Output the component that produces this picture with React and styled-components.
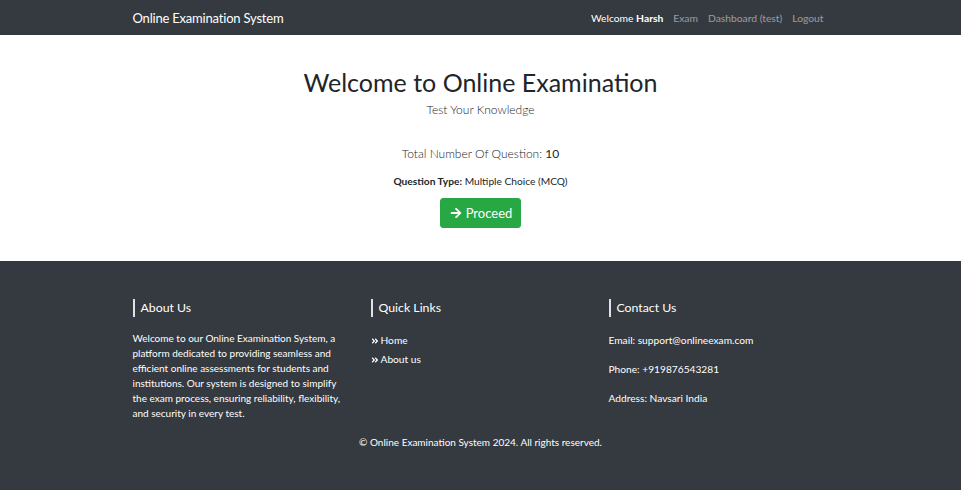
import React from "react";
import styled, { createGlobalStyle } from "styled-components";

const GlobalStyle = createGlobalStyle`
  body {
    margin: 0;
    font-family: Lato, "Open Sans", sans-serif;
    color: #212529;
    background: #fff;
  }
  * { box-sizing: border-box; }
`;

const Container = styled.div`
  width: 720px;
  margin: 0 auto;
  padding: 0 12px;
`;

const Navbar = styled.nav`
  background: #343a40;
  height: 35px;
`;

const NavInner = styled(Container)`
  display: flex;
  align-items: center;
  justify-content: space-between;
  height: 100%;
`;

const Brand = styled.a`
  color: #fff;
  font-size: 13px;
  letter-spacing: -0.2px;
  text-decoration: none;
`;

const NavLinks = styled.div`
  display: flex;
  gap: 10px;
  font-size: 10.3px;
  padding-right: 5px;
`;

const NavLink = styled.a`
  color: ${(p) => (p.active ? "#fff" : "rgba(255,255,255,0.5)")};
  text-decoration: none;
  b { font-weight: 700; }
`;

const Hero = styled.main`
  height: 226px;
  display: flex;
  flex-direction: column;
  align-items: center;
  padding-top: 29px;
`;

const Title = styled.h1`
  margin: 0;
  font-size: 25px;
  font-weight: 400;
  line-height: 36px;
`;

const Lead = styled.p`
  margin: 0;
  font-size: 12px;
  font-weight: 300;
  line-height: 20px;
`;

const Count = styled.p`
  margin: 24px 0 0;
  font-size: 12px;
  font-weight: 300;
  line-height: 20px;
  b { font-weight: 400; }
`;

const TypeLine = styled.p`
  margin: 10px 0 0;
  font-size: 10.2px;
  line-height: 14px;
  b { font-weight: 700; }
`;

const ProceedButton = styled.button`
  margin-top: 10px;
  display: inline-flex;
  align-items: center;
  gap: 4px;
  height: 30px;
  padding: 0 8px 0 9px;
  background: #28a745;
  border: 1px solid #28a745;
  border-radius: 3px;
  color: #fff;
  font-family: inherit;
  font-size: 13px;
  cursor: pointer;
  svg { width: 12px; height: 12px; fill: #fff; }
`;

const Footer = styled.footer`
  background: #343a40;
  height: 229px;
  color: #fff;
  padding-top: 38px;
`;

const FooterGrid = styled(Container)`
  display: grid;
  grid-template-columns: 238px 238px 1fr;
  padding-left: 12px;
`;

const FooterHeading = styled.h5`
  margin: 0 0 14px;
  border-left: 2px solid #dee2e6;
  padding-left: 6px;
  font-size: 12.3px;
  font-weight: 400;
  line-height: 18px;
`;

const FooterText = styled.p`
  margin: 0;
  width: 212px;
  font-size: 10px;
  line-height: 15px;
`;

const LinkList = styled.ul`
  list-style: none;
  margin: 0;
  padding: 2px 0 0;
  display: flex;
  flex-direction: column;
  gap: 4px;
`;

const FooterLink = styled.a`
  display: flex;
  align-items: center;
  gap: 2px;
  color: #fff;
  font-size: 10.2px;
  line-height: 15px;
  text-decoration: none;
  svg { width: 8px; height: 8px; fill: #fff; }
`;

const ContactList = styled.div`
  padding-top: 2px;
`;

const ContactLine = styled.p`
  margin: 0 0 14px;
  font-size: 10.2px;
  line-height: 15px;
`;

const Copyright = styled.p`
  margin: 14px 0 0;
  text-align: center;
  font-size: 10px;
  line-height: 15px;
`;

const ArrowIcon = () => (
  <svg viewBox="0 0 448 512">
    <path d="M190.5 66.9l22.2-22.2c9.4-9.4 24.6-9.4 33.9 0L441 239c9.4 9.4 9.4 24.6 0 33.9L246.6 467.3c-9.4 9.4-24.6 9.4-33.9 0l-22.2-22.2c-9.5-9.5-9.3-25 .4-34.3L311.4 296H24c-13.3 0-24-10.7-24-24v-32c0-13.3 10.7-24 24-24h287.4L190.9 101.2c-9.8-9.3-10-24.8-.4-34.3z" />
  </svg>
);

const ChevronsIcon = () => (
  <svg viewBox="0 0 448 512">
    <path d="M224.3 273l-136 136c-9.4 9.4-24.6 9.4-33.9 0l-22.6-22.6c-9.4-9.4-9.4-24.6 0-33.9l96.4-96.4-96.4-96.4c-9.4-9.4-9.4-24.6 0-33.9L54.3 103c9.4-9.4 24.6-9.4 33.9 0l136 136c9.5 9.4 9.5 24.6.1 34zm192-34l-136-136c-9.4-9.4-24.6-9.4-33.9 0l-22.6 22.6c-9.4 9.4-9.4 24.6 0 33.9l96.4 96.4-96.4 96.4c-9.4 9.4-9.4 24.6 0 33.9l22.6 22.6c9.4 9.4 24.6 9.4 33.9 0l136-136c9.4-9.2 9.4-24.4 0-33.8z" />
  </svg>
);

const App = () => {
  return (
    <>
      <GlobalStyle />
      <Navbar>
        <NavInner>
          <Brand href="#">Online Examination System</Brand>
          <NavLinks>
            <NavLink active href="#">
              Welcome <b>Harsh</b>
            </NavLink>
            <NavLink href="#">Exam</NavLink>
            <NavLink href="#">Dashboard (test)</NavLink>
            <NavLink href="#">Logout</NavLink>
          </NavLinks>
        </NavInner>
      </Navbar>

      <Hero>
        <Title>Welcome to Online Examination</Title>
        <Lead>Test Your Knowledge</Lead>
        <Count>
          Total Number Of Question: <b>10</b>
        </Count>
        <TypeLine>
          <b>Question Type:</b> Multiple Choice (MCQ)
        </TypeLine>
        <ProceedButton>
          <ArrowIcon />
          Proceed
        </ProceedButton>
      </Hero>

      <Footer>
        <FooterGrid>
          <div>
            <FooterHeading>About Us</FooterHeading>
            <FooterText>
              Welcome to our Online Examination System, a platform dedicated to
              providing seamless and efficient online assessments for students
              and institutions. Our system is designed to simplify the exam
              process, ensuring reliability, flexibility, and security in every
              test.
            </FooterText>
          </div>
          <div>
            <FooterHeading>Quick Links</FooterHeading>
            <LinkList>
              <li>
                <FooterLink href="#">
                  <ChevronsIcon />
                  Home
                </FooterLink>
              </li>
              <li>
                <FooterLink href="#">
                  <ChevronsIcon />
                  About us
                </FooterLink>
              </li>
            </LinkList>
          </div>
          <div>
            <FooterHeading>Contact Us</FooterHeading>
            <ContactList>
              <ContactLine>Email: support@onlineexam.com</ContactLine>
              <ContactLine>Phone: +919876543281</ContactLine>
              <ContactLine>Address: Navsari India</ContactLine>
            </ContactList>
          </div>
        </FooterGrid>
        <Copyright>© Online Examination System 2024. All rights reserved.</Copyright>
      </Footer>
    </>
  );
};

export default App;
